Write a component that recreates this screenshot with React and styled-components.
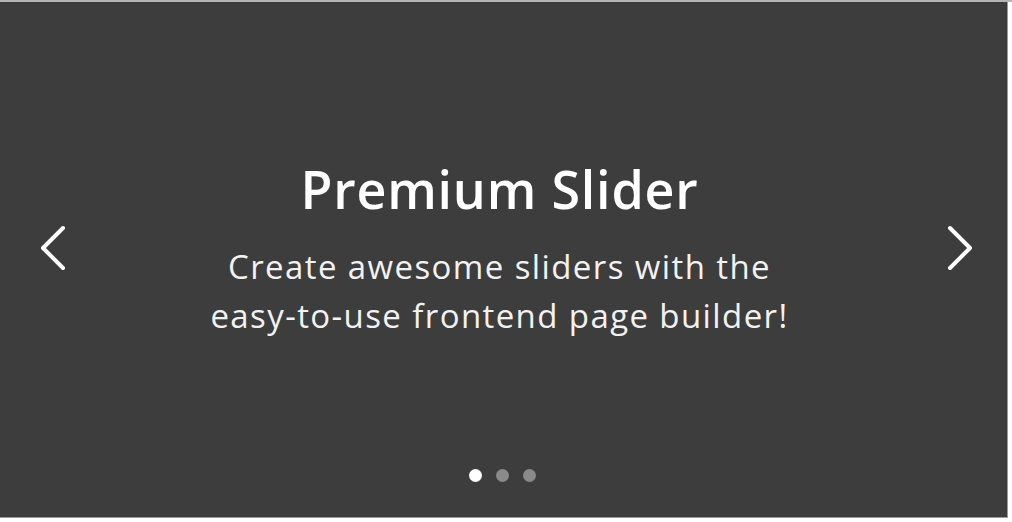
import React, { useState } from "react";
import styled, { createGlobalStyle } from "styled-components";

const Global = createGlobalStyle`
  html, body { margin: 0; padding: 0; background: #ffffff; }
  #root { width: 1012px; height: 522px; }
`;

const Frame = styled.div`
  width: 1012px;
  height: 522px;
  box-sizing: border-box;
  background: #ffffff;
  border-top: 2px solid #b4b4b4;
  display: flex;
  flex-direction: column;
`;

const Slider = styled.section`
  position: relative;
  width: 1008px;
  height: 516px;
  box-sizing: border-box;
  background: #3d3d3d;
  border-right: 1px solid #9a9a9a;
  border-bottom: 1px solid #9a9a9a;
  display: flex;
  flex-direction: column;
  align-items: center;
  padding-top: 152px;
  padding-right: 8px;
  font-family: "Open Sans", "Liberation Sans", sans-serif;
  color: #ffffff;
`;

const Title = styled.h2`
  margin: 0;
  font-size: 52px;
  font-weight: 600;
  line-height: 70px;
  letter-spacing: 0.8px;
`;

const Caption = styled.p`
  margin: 18px 0 0;
  font-size: 33px;
  font-weight: 400;
  line-height: 49px;
  letter-spacing: 1.4px;
  text-align: center;
  color: #f2f2f2;
`;

const Arrow = styled.button`
  position: absolute;
  top: 220px;
  ${(p) => (p.$side === "left" ? "left: 34px;" : "right: 28px;")}
  width: 40px;
  height: 52px;
  padding: 0;
  border: 0;
  background: transparent;
  cursor: pointer;
  display: flex;
  align-items: center;
  justify-content: center;
`;

const Dots = styled.div`
  position: absolute;
  left: 0;
  right: 2px;
  top: 467px;
  display: flex;
  justify-content: center;
  gap: 14px;
`;

const Dot = styled.button`
  width: 13px;
  height: 13px;
  padding: 0;
  border: 0;
  border-radius: 50%;
  background: ${(p) => (p.$active ? "#ffffff" : "#8a8a8a")};
  cursor: pointer;
`;

const Chevron = ({ dir }) => (
  <svg width="40" height="52" viewBox="0 0 40 52" fill="none">
    <path
      d={dir === "left" ? "M29 6 L9 26 L29 46" : "M11 6 L31 26 L11 46"}
      stroke="#ffffff"
      strokeWidth="4"
      strokeLinecap="round"
      strokeLinejoin="round"
    />
  </svg>
);

export default function App() {
  const [active, setActive] = useState(0);
  return (
    <>
      <Global />
      <Frame>
        <Slider>
          <Title>Premium Slider</Title>
          <Caption>
            Create awesome sliders with the
            <br />
            easy-to-use frontend page builder!
          </Caption>
          <Arrow $side="left" aria-label="Previous" onClick={() => setActive((active + 2) % 3)}>
            <Chevron dir="left" />
          </Arrow>
          <Arrow $side="right" aria-label="Next" onClick={() => setActive((active + 1) % 3)}>
            <Chevron dir="right" />
          </Arrow>
          <Dots>
            {[0, 1, 2].map((i) => (
              <Dot key={i} $active={i === active} aria-label={`Slide ${i + 1}`} onClick={() => setActive(i)} />
            ))}
          </Dots>
        </Slider>
      </Frame>
    </>
  );
}
